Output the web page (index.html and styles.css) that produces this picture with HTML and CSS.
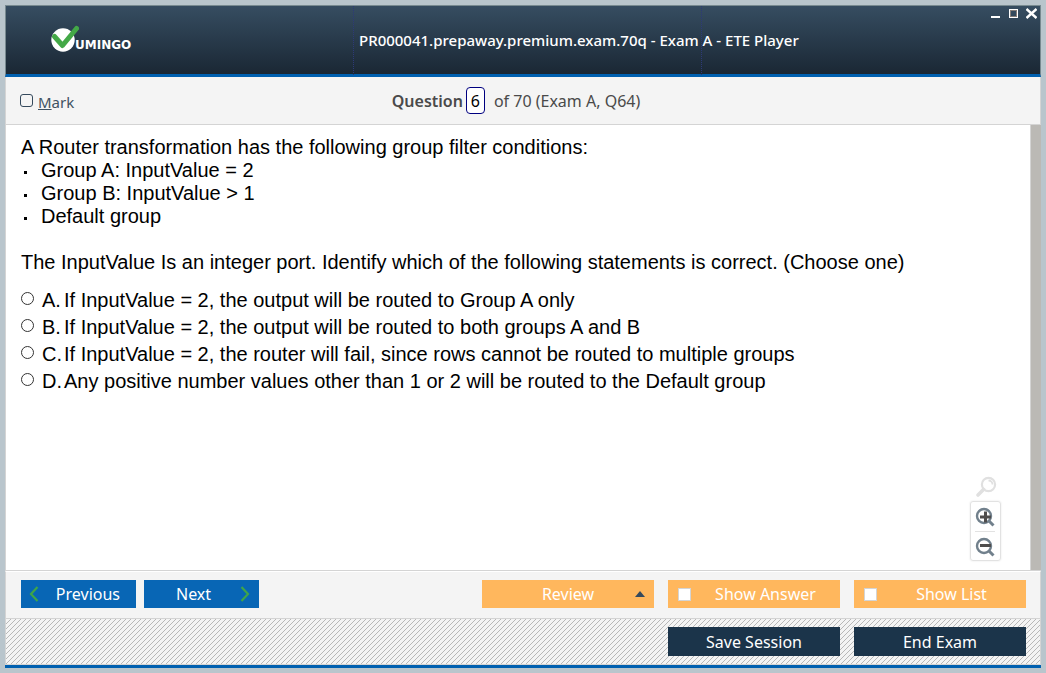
FILE: index.html
```html
<!DOCTYPE html>
<html lang="en">
<head>
<meta charset="utf-8">
<title>ETE Player</title>
<link rel="stylesheet" href="styles.css">
</head>
<body>
<div class="window">
  <header class="titlebar">
    <div class="brand">
      <svg class="brand-mark" width="28" height="28" viewBox="0 0 28 28" aria-hidden="true">
        <circle cx="12" cy="15" r="11.7" fill="#fff"/>
        <path d="M3.500 11.500L11.500 20.500L25.500 3.500" fill="none" stroke="#43a847" stroke-width="5" stroke-linecap="round" stroke-linejoin="round"/>
      </svg>
      <span class="brand-name">UMINGO</span>
    </div>
    <h1 class="title">PR000041.prepaway.premium.exam.70q - Exam A - ETE Player</h1>
    <div class="title-end"></div>
    <div class="window-controls">
      <button type="button" class="control" aria-label="Minimize"><svg width="11" height="11" viewBox="0 0 11 11"><path d="M1 9h9" stroke="#fff" stroke-width="2"/></svg></button>
      <button type="button" class="control" aria-label="Maximize"><svg width="11" height="11" viewBox="0 0 11 11" fill="none"><rect x="1.500" y="1.500" width="8" height="8" stroke="#fff"/><rect x="2.500" y="2.500" width="6" height="6" stroke="#857d78"/></svg></button>
      <button type="button" class="control" aria-label="Close"><svg width="11" height="11" viewBox="0 0 11 11"><path d="M.5 1l10 9M10.500 1l-10 9" stroke="#fff" stroke-width="2.400"/></svg></button>
    </div>
  </header>

  <div class="question-bar">
    <label class="mark"><input type="checkbox" class="mark-box"><span class="mark-text"><u>M</u>ark</span></label>
    <div class="position">
      <label class="position-label" for="number">Question</label>
      <input id="number" class="position-number" type="text" value="6">
      <span>of 70 (Exam A, Q64)</span>
    </div>
  </div>

  <main class="content">
    <div class="question">
      <p class="text">A Router transformation has the following group filter conditions:</p>
      <ul class="conditions">
        <li>Group A: InputValue = 2</li>
        <li>Group B: InputValue &gt; 1</li>
        <li>Default group</li>
      </ul>
      <p class="text">The InputValue Is an integer port. Identify which of the following statements is correct. (Choose one)</p>
      <div class="answers">
        <label class="answer"><input type="radio" name="answer" class="radio"><span>A.</span><span>If InputValue = 2, the output will be routed to Group A only</span></label>
        <label class="answer"><input type="radio" name="answer" class="radio"><span>B.</span><span>If InputValue = 2, the output will be routed to both groups A and B</span></label>
        <label class="answer"><input type="radio" name="answer" class="radio"><span>C.</span><span>If InputValue = 2, the router will fail, since rows cannot be routed to multiple groups</span></label>
        <label class="answer"><input type="radio" name="answer" class="radio"><span>D.</span><span>Any positive number values other than 1 or 2 will be routed to the Default group</span></label>
      </div>
    </div>
    <div class="scrollbar"></div>
    <div class="zoom">
      <svg width="22" height="22" viewBox="0 0 22 22" fill="none" stroke="#e0e0e0" aria-hidden="true"><circle cx="13.500" cy="8.500" r="6.600" stroke-width="2.200"/><path d="M13.500 4.500a4 4 0 0 1 4 4" stroke-width="1.800"/><path d="M8.500 13.500L3 19" stroke-width="3.600" stroke-linecap="round"/></svg>
      <div class="zoom-box">
        <button type="button" class="zoom-button" aria-label="Zoom in"><svg width="20" height="20" viewBox="0 0 20 20" fill="none"><circle cx="9" cy="9" r="7" stroke="#71808c" stroke-width="2.400"/><path d="M14 14l4.500 4.500" stroke="#71808c" stroke-width="3"/><path d="M5 10h11M10.500 4.500v11" stroke="#4f4d4c" stroke-width="3"/></svg></button>
        <button type="button" class="zoom-button" aria-label="Zoom out"><svg width="20" height="20" viewBox="0 0 20 20" fill="none"><circle cx="9" cy="9" r="7" stroke="#71808c" stroke-width="2.400"/><path d="M14 14l4.500 4.500" stroke="#71808c" stroke-width="3"/><path d="M5 8.500h11" stroke="#4f4d4c" stroke-width="3"/></svg></button>
      </div>
    </div>
  </main>

  <nav class="actions">
    <button type="button" class="button step step-back"><svg width="10" height="16" viewBox="0 0 10 16"><path d="M8.500 1L2 8l6.500 7" fill="none" stroke="#3fa549" stroke-width="2.200"/></svg><span>Previous</span></button>
    <button type="button" class="button step step-next"><span>Next</span><svg width="10" height="16" viewBox="0 0 10 16"><path d="M1.500 1L8 8l-6.500 7" fill="none" stroke="#3fa549" stroke-width="2.200"/></svg></button>
    <span class="spacer"></span>
    <button type="button" class="button wide review"><span>Review</span><svg class="review-arrow" width="10" height="6" viewBox="0 0 10 6"><path d="M0 6l5-6 5 6z" fill="#34495c"/></svg></button>
    <label class="button wide toggle"><input type="checkbox" class="toggle-box"><span>Show Answer</span></label>
    <label class="button wide toggle"><input type="checkbox" class="toggle-box"><span>Show List</span></label>
  </nav>

  <footer class="session">
    <button type="button" class="button wide dark">Save Session</button>
    <button type="button" class="button wide dark">End Exam</button>
  </footer>
</div>
</body>
</html>
```
FILE: styles.css
```css
* { box-sizing: border-box; }

body {
  margin: 0;
  height: 100vh;
  padding: 5px;
  background: #b9c5cc;
  font-family: "Noto Sans", "Open Sans", sans-serif;
  color: #000;
}

button, input { font: inherit; margin: 0; padding: 0; border: 0; background: none; }
svg { display: block; }

.window {
  height: 100%;
  display: flex;
  flex-direction: column;
  background: #f4f4f4;
  border-bottom: 3px solid #0060b0;
}

.titlebar {
  position: relative;
  display: grid;
  grid-template-columns: minmax(0, 347fr) minmax(0, 348fr) minmax(0, 339fr);
  height: 72px;
  flex: none;
  background: linear-gradient(#364d61, #1a2734);
  border: 1px solid #788a90;
  border-bottom: 3px solid #0060b0;
}

.brand { display: flex; align-items: center; padding-left: 45px; }
.brand-mark { margin-bottom: 4px; }
.brand-name {
  margin-left: -4px;
  padding-top: 9px;
  font: bold 12px/14px "DejaVu Sans", sans-serif;
  color: #fff;
}

.title {
  margin: 0;
  padding-left: 5px;
  border-left: 1px dotted #2d3a78;
  font-size: 15px;
  font-weight: 500;
  line-height: 69px;
  color: #fff;
  white-space: nowrap;
}
.title-end { border-left: 1px dotted #2d3a78; }

.window-controls { position: absolute; top: 2px; right: 3px; display: flex; gap: 7px; }
.control { width: 11px; height: 11px; }

.question-bar {
  display: grid;
  grid-template-columns: 1fr auto 1fr;
  align-items: center;
  height: 48px;
  flex: none;
  padding: 0 28px 0 14px;
  border: 1px solid #d4d4d4;
  border-top: 0;
  font-size: 16px;
  color: #4a4a4a;
}

.mark { display: flex; align-items: center; gap: 5px; font-size: 15px; color: #3f5262; }
.mark-text { padding-top: 2px; }
.mark-box {
  appearance: none;
  width: 13px;
  height: 13px;
  border: 1px solid #34495c;
  border-radius: 3px;
}

.position { display: flex; align-items: center; }
.position-label { font-weight: 600; }
.position-number {
  width: 19px;
  height: 27px;
  margin: 0 9px 0 3px;
  border: 1px solid #000080;
  border-radius: 4px;
  background: #fff;
  color: #000;
  text-align: center;
}

.content {
  position: relative;
  display: flex;
  flex: 1;
  min-height: 0;
  background: #fff;
  border-left: 1px solid #d4d4d4;
  border-bottom: 1px solid #d4d4d4;
}
.question {
  flex: 1;
  padding: 11px 15px;
  font: 20px/23px "Liberation Sans", Arial, sans-serif;
}
.text { margin: 0; }

.conditions { margin: 0 0 23px; padding: 0; list-style: none; }
.conditions li { display: flex; align-items: center; gap: 14px; }
.conditions li::before {
  content: "";
  width: 3px;
  height: 3px;
  margin: 4px 0 0 3px;
  background: #000;
}

.answers { margin-top: 13px; }
.answer {
  display: grid;
  grid-template-columns: 21px 22px 1fr;
  align-items: center;
  line-height: 27px;
}
.radio {
  appearance: none;
  width: 13px;
  height: 13px;
  margin-bottom: 4px;
  border: 1px solid #333;
  border-radius: 50%;
  background: #fff;
}

.scrollbar { width: 11px; background: #bbb9b5; border-left: 1px solid #d4d4d4; }

.zoom {
  position: absolute;
  right: 40px;
  bottom: 9px;
  display: flex;
  flex-direction: column;
  align-items: center;
  gap: 3px;
}
.zoom-box {
  width: 31px;
  padding: 0 5px 0 4px;
  border: 1px solid #e2e2e2;
  border-radius: 3px;
  box-shadow: 0 0 2px #e2e2e2;
}
.zoom-button { display: flex; align-items: center; width: 100%; height: 29px; padding-top: 1px; }
.zoom-button + .zoom-button { border-top: 1px solid #e2e2e2; }

.actions {
  display: flex;
  align-items: flex-start;
  height: 48px;
  flex: none;
  padding: 8px 14px 0 15px;
  border: 1px solid #d4d4d4;
  border-top: 1px solid #fff;
}
.spacer { flex: 1; }

.button {
  display: flex;
  align-items: center;
  justify-content: center;
  height: 28px;
  font-size: 16px;
  line-height: 28px;
  color: #fff;
  white-space: nowrap;
}
.step { width: 115px; background: #0866b5; justify-content: space-between; }
.step-back { padding: 0 16px 0 8px; margin-right: 8px; }
.step-next { padding: 0 9px 0 32px; }
.wide { width: 172px; }
.wide + .wide { margin-left: 14px; }
.review { position: relative; background: #ffb75d; }
.review-arrow { position: absolute; right: 9px; top: 11px; }
.toggle { background: #ffb75d; padding-left: 10px; }
.toggle span { flex: 1; text-align: center; }
.toggle-box {
  appearance: none;
  width: 13px;
  height: 13px;
  border: 1px solid #d4d4d4;
  background: #fff;
}

.session {
  display: flex;
  align-items: center;
  justify-content: flex-end;
  height: 46px;
  flex: none;
  padding-right: 14px;
  border: 1px solid #d4d4d4;
  border-top: 0;
  background: #f4f4f4 url("data:image/svg+xml,%3Csvg xmlns='http://www.w3.org/2000/svg' width='5' height='5'%3E%3Cpath d='M4 0h1v1h-1zM3 1h1v1h-1zM2 2h1v1h-1zM1 3h1v1h-1zM0 4h1v1h-1z' fill='%23b8b8b8'/%3E%3C/svg%3E");
}
.dark { height: 29px; background: #1b344a; }
```
